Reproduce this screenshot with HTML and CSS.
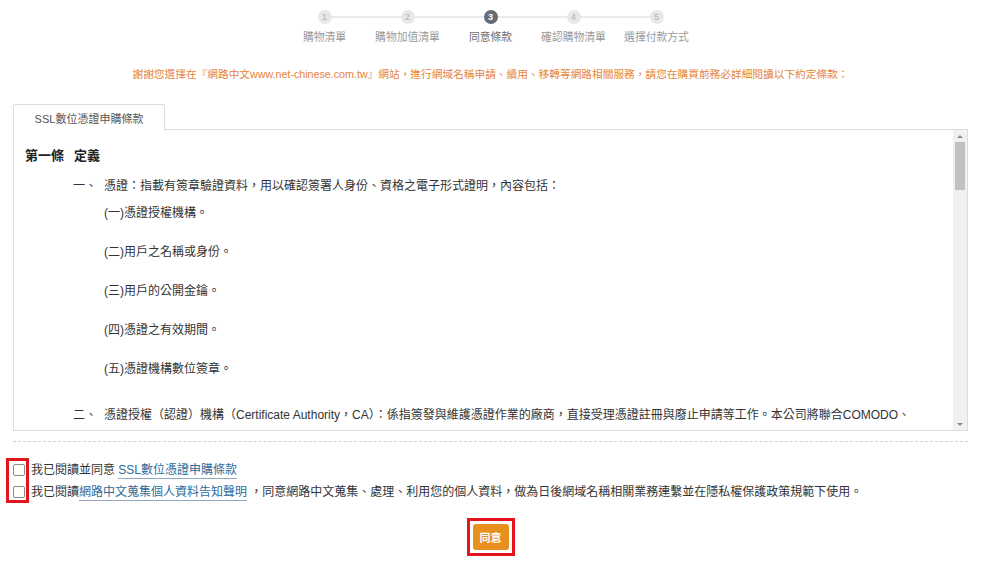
FILE: index.html
```html
<!DOCTYPE html>
<html lang="zh-Hant">
<head>
    <meta charset="UTF-8">
    <meta name="viewport" content="width=device-width, initial-scale=1.0">
    <title>同意條款</title>
    <link rel="stylesheet" href="styles.css">
</head>
<body>
    <div class="page">
        <ol class="steps">
            <li class="step"><span class="step-num">1</span><span class="step-label">購物清單</span></li>
            <li class="step"><span class="step-num">2</span><span class="step-label">購物加值清單</span></li>
            <li class="step active"><span class="step-num">3</span><span class="step-label">同意條款</span></li>
            <li class="step"><span class="step-num">4</span><span class="step-label">確認購物清單</span></li>
            <li class="step"><span class="step-num">5</span><span class="step-label">選擇付款方式</span></li>
        </ol>

        <p class="notice">謝謝您選擇在『網路中文www.net-chinese.com.tw』網站，進行網域名稱申請、續用、移轉等網路相關服務，請您在購買前務必詳細閱讀以下約定條款：</p>

        <div class="tabs">
            <span class="tab">SSL數位憑證申購條款</span>
        </div>
        <div class="terms">
            <div class="terms-body">
                <h3 class="article"><span>第一條</span><span>定義</span></h3>
                <div class="clause">
                    <span class="clause-no">一、</span>
                    <div class="clause-body">
                        <p class="clause-lead">憑證：指載有簽章驗證資料，用以確認簽署人身份、資格之電子形式證明，內容包括：</p>
                        <p class="item">(一)憑證授權機構。</p>
                        <p class="item">(二)用戶之名稱或身份。</p>
                        <p class="item">(三)用戶的公開金鑰。</p>
                        <p class="item">(四)憑證之有效期間。</p>
                        <p class="item">(五)憑證機構數位簽章。</p>
                    </div>
                </div>
                <div class="clause">
                    <span class="clause-no">二、</span>
                    <div class="clause-body">
                        <p class="clause-lead">憑證授權（認證）機構（Certificate Authority，CA）：係指簽發與維護憑證作業的廠商，直接受理憑證註冊與廢止申請等工作。本公司將聯合COMODO、</p>
                    </div>
                </div>
            </div>
            <div class="scrollbar">
                <span class="sb-btn"><span class="arrow-up"></span></span>
                <span class="sb-thumb"></span>
                <span class="sb-track"></span>
                <span class="sb-btn"><span class="arrow-down"></span></span>
            </div>
        </div>

        <hr class="divider">

        <div class="agree">
            <span class="mark-box"></span>
            <label class="agree-row"><input type="checkbox" class="check">我已閱讀並同意 <a href="#" class="agree-link">SSL數位憑證申購條款</a></label>
            <label class="agree-row"><input type="checkbox" class="check">我已閱讀<a href="#" class="agree-link">網路中文蒐集個人資料告知聲明</a> ，同意網路中文蒐集、處理、利用您的個人資料，做為日後網域名稱相關業務連繫並在隱私權保護政策規範下使用。</label>
        </div>

        <div class="submit">
            <span class="mark-frame"><button type="button" class="btn-agree">同意</button></span>
        </div>
    </div>
</body>
</html>
```
FILE: styles.css
```css
body {
    margin: 0;
    background: #ffffff;
    color: #333;
    font-family: "Liberation Sans", Arial, "Noto Sans CJK TC", sans-serif;
}
.page {
    width: 955px;
    margin-left: 13px;
}
.steps {
    list-style: none;
    margin: 0;
    padding: 10px 0 0;
    display: flex;
    justify-content: center;
}
.step {
    position: relative;
    width: 83px;
    display: flex;
    flex-direction: column;
    align-items: center;
    gap: 6px;
}
.step + .step::before {
    content: "";
    position: absolute;
    top: 6px;
    right: 50%;
    width: 83px;
    height: 2px;
    background: #ebebeb;
}
.step-num {
    position: relative;
    z-index: 1;
    width: 14px;
    height: 14px;
    border-radius: 50%;
    background: #e8e8e8;
    color: #b0b0b0;
    font-size: 9px;
    line-height: 14px;
    text-align: center;
}
.step-label {
    font-size: 10.8px;
    line-height: 14px;
    color: #9a9a9a;
    white-space: nowrap;
}
.step.active .step-num {
    background: #646c77;
    color: #ffffff;
    font-weight: bold;
}
.step.active .step-label {
    color: #707070;
}
.notice {
    margin: 22px 0 0;
    font-size: 10.7px;
    line-height: 16px;
    color: #e5843a;
    text-align: center;
}
.tabs {
    margin-top: 22px;
    display: flex;
}
.tab {
    width: 152px;
    height: 26px;
    box-sizing: border-box;
    border: 1px solid #dddddd;
    border-bottom: none;
    border-radius: 2px 2px 0 0;
    font-size: 11px;
    line-height: 28px;
    color: #555;
    text-align: center;
    background: #fff;
    position: relative;
    margin-bottom: -1px;
}
.terms {
    height: 302px;
    box-sizing: border-box;
    border: 1px solid #dddddd;
    display: flex;
}
.terms-body {
    flex: 1;
    overflow: hidden;
    padding: 17px 0 0 11px;
}
.scrollbar {
    width: 14px;
    flex: none;
    display: flex;
    flex-direction: column;
    background: #f1f1f1;
}
.sb-btn {
    height: 12px;
    display: flex;
    align-items: center;
    justify-content: center;
}
.arrow-up {
    border-left: 3px solid transparent;
    border-right: 3px solid transparent;
    border-bottom: 3px solid #8a8a8a;
}
.arrow-down {
    border-left: 3px solid transparent;
    border-right: 3px solid transparent;
    border-top: 3px solid #8a8a8a;
}
.sb-thumb {
    height: 48px;
    margin: 0 2px;
    background: #c1c1c1;
}
.sb-track {
    flex: 1;
}
.article {
    margin: 0 0 11px;
    font-size: 13px;
    line-height: 18px;
    font-weight: bold;
    color: #222;
    display: flex;
    gap: 10px;
}
.clause {
    display: flex;
    margin: 26px 0 0 48px;
    font-size: 12px;
    color: #333;
}
.article + .clause {
    margin-top: 0;
}
.clause-no {
    width: 31px;
    flex: none;
    line-height: 20px;
}
.clause-body {
    flex: 1;
    padding-right: 10px;
}
.clause-body p {
    margin: 0;
    line-height: 20px;
}
.clause-lead + .item {
    margin-top: 7px;
}
.item + .item {
    margin-top: 19px;
}
.divider {
    margin: 10px 0 0;
    border: none;
    border-top: 1px dashed #d0d0d0;
}
.agree {
    position: relative;
    margin-top: 17px;
}
.agree-row {
    display: block;
    height: 22px;
    font-size: 12px;
    line-height: 22px;
    color: #333;
    white-space: nowrap;
}
.check {
    appearance: none;
    -webkit-appearance: none;
    width: 12px;
    height: 12px;
    margin: 0 6px 0 0;
    border: 1px solid #8c8c8c;
    border-radius: 2px;
    background: #fff;
    vertical-align: -2px;
}
.agree-link {
    color: #2d6a9a;
    text-decoration: none;
    border-bottom: 1px solid #8fa8c0;
    padding-bottom: 1px;
}
.mark-box {
    position: absolute;
    left: -7px;
    top: -1px;
    width: 23px;
    height: 45px;
    box-sizing: border-box;
    border: 3px solid #e3141c;
}
.submit {
    margin-top: 15px;
    text-align: center;
}
.mark-frame {
    display: inline-block;
    border: 3px solid #e3141c;
    padding: 3px;
}
.btn-agree {
    display: block;
    width: 36px;
    height: 26px;
    padding: 0;
    border: none;
    border-radius: 3px;
    background: #e8901e;
    color: #ffffff;
    font-size: 11px;
    font-weight: bold;
    font-family: "Liberation Sans", "Noto Sans CJK TC", sans-serif;
    cursor: pointer;
}
```
